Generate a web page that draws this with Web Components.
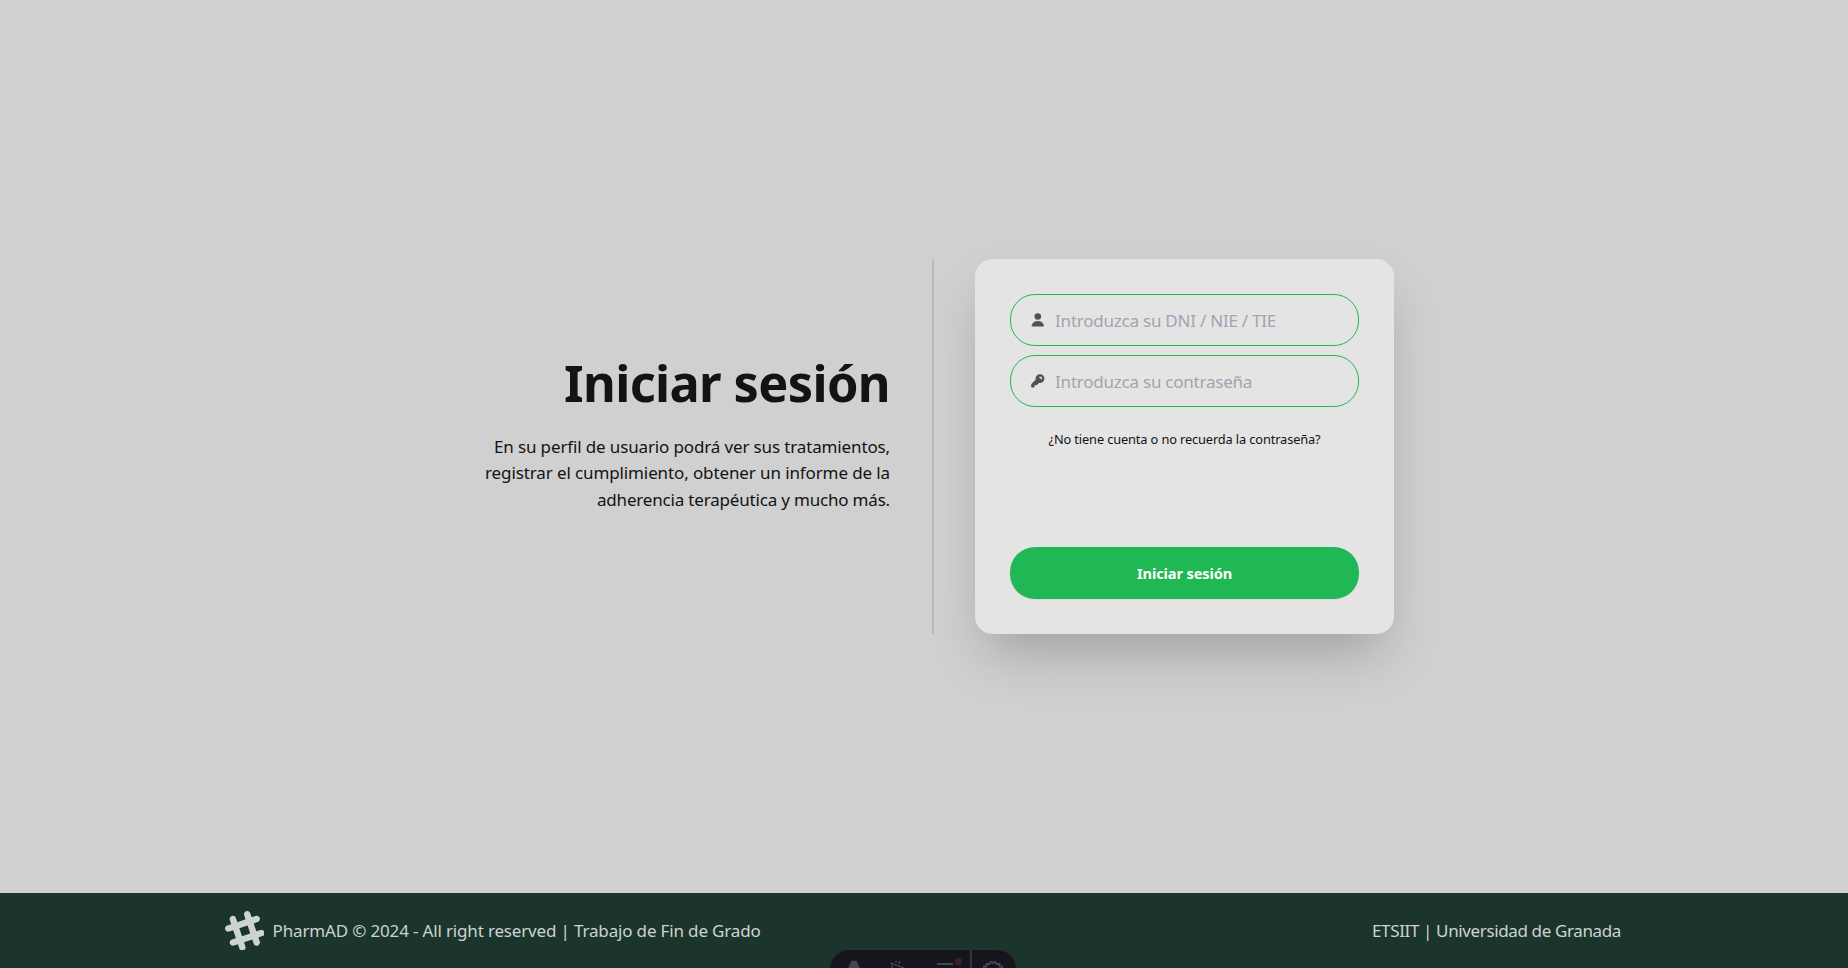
<!DOCTYPE html>
<html lang="es">
<head>
<meta charset="utf-8">
<title>PharmAD - Iniciar sesión</title>
<style>
html{font-size:17.6px}
body{margin:0;height:968px;overflow:hidden;background:#d0d0d0;color:#131313;font-family:"Noto Sans",sans-serif}
</style>
</head>
<body>
<pharm-app></pharm-app>
<script>
const define = (name, html, ready) => customElements.define(name, class extends HTMLElement {
  constructor() {
    super();
    const t = document.createElement('template');
    t.innerHTML = html;
    this.attachShadow({mode: 'open'}).append(t.content.cloneNode(true));
  }
  connectedCallback() { if (ready) ready.call(this); }
});

// A single line whose tracking is adjusted so that it fills the given width.
define('fit-line', `<style>:host{display:block;white-space:nowrap;width:max-content;flex:none}span{display:inline-block}</style><span><slot></slot></span>`, function () {
  const n = this.textContent.length, w = +this.getAttribute('w');
  const span = this.shadowRoot.querySelector('span');
  span.style.letterSpacing = (w - span.getBoundingClientRect().width) / n + 'px';
});

define('login-intro', `<style>
:host{display:flex;flex-direction:column;align-items:flex-end;justify-content:center;box-sizing:border-box;width:446px;height:375px;padding-bottom:24px}
h1{margin:0 0 25px;font-size:50.5px;line-height:53px;font-weight:700}
p{margin:0;font-size:17px;line-height:26.4px;display:flex;flex-direction:column;align-items:flex-end}
</style>
<h1><fit-line w="326">Iniciar sesión</fit-line></h1>
<p><fit-line w="396">En su perfil de usuario podrá ver sus tratamientos,</fit-line><fit-line w="405">registrar el cumplimiento, obtener un informe de la</fit-line><fit-line w="293">adherencia terapéutica y mucho más.</fit-line></p>`);

define('login-field', `<style>
:host{display:flex;align-items:center;gap:9px;box-sizing:border-box;height:52px;padding:0 17.5px;border:1px solid #1fb855;border-radius:25px;font-size:17px;color:#9fa5b1}
::slotted(svg){width:17.6px;height:17.6px;fill:#131313;opacity:.7;flex:none}
</style><slot name="icon"></slot><slot></slot>`);

define('login-button', `<style>
:host{display:flex;align-items:center;justify-content:center;height:52px;border-radius:25px;background:#1fb855;color:#fff;font-size:14.6px;font-weight:700;box-shadow:0 1px 2px rgba(0,0,0,.05)}
</style><slot></slot>`);

define('login-card', `<style>
:host{display:flex;flex-direction:column;box-sizing:border-box;width:419px;height:375px;padding:35px;border-radius:17.6px;background:#e4e4e4;box-shadow:0 27.5px 55px -13.2px rgba(0,0,0,.25)}
login-field+login-field{margin-top:9px}
.help{align-self:center;margin-top:22px;font-size:12.8px;line-height:20px}
login-button{margin-top:auto}
</style>
<login-field><svg slot="icon" viewBox="0 0 16 16"><path d="M8 8a3 3 0 1 0 0-6 3 3 0 0 0 0 6ZM12.735 14c.618 0 1.093-.561.872-1.139a6.002 6.002 0 0 0-11.215 0c-.22.578.254 1.139.872 1.139h9.47Z"/></svg><fit-line w="221">Introduzca su DNI / NIE / TIE</fit-line></login-field>
<login-field><svg slot="icon" viewBox="0 0 16 16"><path fill-rule="evenodd" d="M14 6a4 4 0 0 1-4.899 3.899l-1.955 1.955a.5.5 0 0 1-.353.146H5v1.5a.5.5 0 0 1-.5.5h-2a.5.5 0 0 1-.5-.5v-2.293a.5.5 0 0 1 .146-.353l3.955-3.955A4 4 0 1 1 14 6Zm-4-2a.75.75 0 0 0 0 1.5.5.5 0 0 1 .5.5.75.75 0 0 0 1.5 0 2 2 0 0 0-2-2Z"/></svg><fit-line w="197">Introduzca su contraseña</fit-line></login-field>
<div class="help"><fit-line w="272">¿No tiene cuenta o no recuerda la contraseña?</fit-line></div>
<login-button><fit-line w="95">Iniciar sesión</fit-line></login-button>`);

define('site-footer', `<style>
:host{display:flex;align-items:center;box-sizing:border-box;height:75px;padding:0 227px 0 224.5px;background:#1b352d;color:#cdd3d1;font-size:17px}
svg{width:39.6px;height:39.6px;fill:#cdd3d1;margin-right:8.5px}
.right{margin-left:auto}
</style>
<svg viewBox="0 0 24 24"><path fill-rule="evenodd" d="M22.672 15.226l-2.432.811.841 2.515c.33 1.019-.209 2.127-1.23 2.456-1.15.325-2.148-.321-2.463-1.226l-.84-2.518-5.013 1.677.84 2.517c.391 1.203-.434 2.542-1.831 2.542-.88 0-1.601-.564-1.86-1.314l-.842-2.516-2.431.809c-1.135.328-2.145-.317-2.463-1.229-.329-1.018.211-2.127 1.231-2.456l2.432-.809-1.621-4.823-2.432.808c-1.355.384-2.558-.59-2.558-1.839 0-.817.509-1.582 1.327-1.846l2.433-.809-.842-2.515c-.33-1.02.211-2.129 1.232-2.458 1.02-.329 2.13.209 2.461 1.229l.842 2.515 5.011-1.677-.839-2.517c-.403-1.238.484-2.553 1.843-2.553.819 0 1.585.509 1.85 1.326l.841 2.517 2.431-.81c1.02-.33 2.131.211 2.461 1.229.332 1.018-.21 2.126-1.23 2.456l-2.433.809 1.622 4.823 2.433-.809c1.242-.401 2.557.484 2.557 1.838 0 .819-.51 1.583-1.328 1.847m-8.992-6.428l-5.01 1.675 1.619 4.828 5.011-1.674-1.62-4.829z"/></svg>
<fit-line w="488">PharmAD © 2024 - All right reserved | Trabajo de Fin de Grado</fit-line>
<fit-line class="right" w="249">ETSIIT | Universidad de Granada</fit-line>`);

// The developer toolbar peeks over the footer from below the window edge.
define('dev-toolbar', `<style>
:host{position:absolute;left:829px;top:949px;width:188px;height:19px;overflow:hidden}
svg{display:block}
</style>
<svg width="188" height="40" viewBox="0 0 188 40">
<rect x=".5" y=".5" width="187" height="39" rx="19.5" fill="#15161b" stroke="#2b3035"/>
<path d="M18.5 21l3.500-8.500q.3-.7 1-.7h4q.7 0 1 .7l3.500 8.500z" fill="#44474c"/>
<path d="M62.5 21l1-6.300 13 5M61.500 14l2.500 1M67 12v1.800M70.500 12v1.800l-1 1" fill="none" stroke="#44474c" stroke-width="1.4"/>
<path d="M108 15h16" stroke="#44474c" stroke-width="2"/>
<circle cx="129.5" cy="12.5" r="3.7" fill="#40192b"/>
<path d="M142 1v38" stroke="#30343b" stroke-width="2"/>
<path d="M155.500 19v-1.500h2.500v-2.500h3l1.200-2h1l.8 1h1l.8-1h1l1.200 2h3v2.500h2.500v1.500" transform="translate(-.5 0)" fill="none" stroke="#44474c" stroke-width="1.8"/>
</svg>`);

define('pharm-app', `<style>
:host{display:flex;flex-direction:column;position:relative;height:968px}
main{flex:1;display:flex;align-items:center;justify-content:center}
.rule{width:2px;height:375px;background:#bababa;margin:0 41px 0 42px}
login-intro{margin-left:-10px}
</style>
<main><login-intro></login-intro><div class="rule"></div><login-card></login-card></main>
<site-footer></site-footer>
<dev-toolbar></dev-toolbar>`);
</script>
</body>
</html>
